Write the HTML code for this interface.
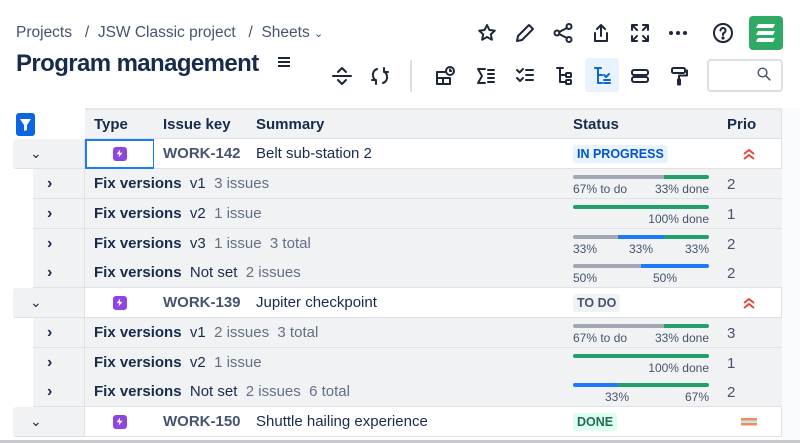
<!DOCTYPE html>
<html><head><meta charset="utf-8">
<style>
*{box-sizing:border-box;margin:0;padding:0}
body{width:800px;height:443px;overflow:hidden;background:#fff;font-family:"Liberation Sans",sans-serif;color:#172b4d;position:relative}
.a{position:absolute}
.ic{position:absolute;width:22px;height:22px}
.ic svg{width:22px;height:22px;fill:none;stroke:#1d2739;stroke-width:2;stroke-linecap:round;stroke-linejoin:round}
.cell{position:absolute;font-size:15px;display:flex;align-items:center;border-right:1px solid #dfe1e6;border-bottom:1px solid #dfe1e6;white-space:nowrap}
.g{background:#f1f2f4}
.w{background:#fff}
.bar{position:absolute;left:573px;width:136px;height:4px;border-radius:2px;overflow:hidden;display:flex}
.pl{position:absolute;font-size:12px;color:#44546f}
.lz{display:inline-block;width:14px;height:14px;background:#8f46e0;border-radius:3px;position:relative}
.lz:after{content:"";position:absolute;left:4px;top:3px;width:6px;height:8px;background:#fff;clip-path:polygon(60% 0,0 60%,45% 60%,35% 100%,100% 40%,55% 40%)}
</style></head><body>
<div class="a" style="left:16px;top:24px;font-size:15.5px;color:#44546f">Projects &nbsp; / &nbsp;JSW Classic project &nbsp; / &nbsp;Sheets <span style="font-size:11px">&#8964;</span></div>
<div class="a" style="left:16px;top:50px;font-size:24px;font-weight:bold;color:#172b4d;letter-spacing:-0.6px">Program management</div>
<div class="a" style="left:278px;top:57px;width:12px;height:2px;background:#1d2739;box-shadow:0 4px 0 #1d2739,0 8px 0 #1d2739"></div>

<div class="ic" style="left:476px;top:22px"><svg viewBox="0 0 22 22"><path d="M11 3l2.4 5 5.4.6-4 3.7 1.1 5.4L11 15l-4.9 2.7 1.1-5.4-4-3.7 5.4-.6z"/></svg></div>
<div class="ic" style="left:514px;top:22px"><svg viewBox="0 0 22 22"><path d="M15 3l4 4L8 18l-5 1 1-5z"/></svg></div>
<div class="ic" style="left:552px;top:22px"><svg viewBox="0 0 22 22"><circle cx="5" cy="11" r="2.5"/><circle cx="17" cy="4.5" r="2.5"/><circle cx="17" cy="17.5" r="2.5"/><path d="M7 10l8-4M7 12l8 4"/></svg></div>
<div class="ic" style="left:590px;top:22px"><svg viewBox="0 0 22 22"><path d="M11 3v11M7 7l4-4 4 4M5 11v8h12v-8"/></svg></div>
<div class="ic" style="left:629px;top:22px"><svg viewBox="0 0 22 22"><path d="M3 8V3h5M14 3h5v5M19 14v5h-5M8 19H3v-5M3 3l5 5M19 3l-5 5M19 19l-5-5M3 19l5-5"/></svg></div>
<div class="a" style="left:669px;top:31px;width:4px;height:4px;border-radius:2px;background:#1d2739;box-shadow:7px 0 0 #1d2739,14px 0 0 #1d2739"></div>
<div class="ic" style="left:712px;top:22px"><svg viewBox="0 0 22 22"><circle cx="11" cy="11" r="9"/><path d="M8.5 8.5a2.5 2.5 0 1 1 3.5 2.3c-.7.3-1 .8-1 1.5v.7"/><circle cx="11" cy="16" r=".6" fill="#1d2739"/></svg></div>
<div class="a" style="left:749px;top:16px;width:34px;height:34px;background:#2eaa64;border-radius:4px"><svg viewBox="0 0 34 34" width="34" height="34" style="fill:#fff"><path d="M9 8h17l-2 4H7zM9 15h17l-2 4H7zM9 22h17l-2 4H7z"/></svg></div>

<div class="ic" style="left:331px;top:65px"><svg viewBox="0 0 22 22"><path d="M2 11h18M7 7l4-4 4 4M7 15l4 4 4-4"/></svg></div>
<div class="ic" style="left:369px;top:65px"><svg viewBox="0 0 22 22"><path d="M8 4C5 5 3.5 8 4 11c.3 2 1.5 3.5 3 4.5M7 19v-4H3M14 18c3-1 4.5-4 4-7-.3-2-1.5-3.5-3-4.5M15 3v4h4"/></svg></div>
<div class="a" style="left:410px;top:60px;width:2px;height:32px;background:#dcdfe4"></div>
<div class="ic" style="left:434px;top:65px"><svg viewBox="0 0 22 22"><path d="M11 7H3v12h13v-6M3 13h13M9 13v6"/><circle cx="16" cy="6" r="4"/><path d="M16 4.5V6h1.3"/></svg></div>
<div class="ic" style="left:475px;top:65px"><svg viewBox="0 0 22 22"><path d="M10 4H3l4 7-4 7h7M13 5h6M13 9h6M13 13h6M13 17h6"/></svg></div>
<div class="ic" style="left:514px;top:65px"><svg viewBox="0 0 22 22"><path d="M3 5l2.5 2.5L9 4M3 13l3 3 3-3M12 5h7M12 10h7M12 15h7"/></svg></div>
<div class="ic" style="left:553px;top:65px"><svg viewBox="0 0 22 22"><path d="M4 3h6M7 3v14h5M7 10h5"/><rect x="13" y="8" width="5" height="4" rx="1"/><rect x="13" y="15" width="5" height="4" rx="1"/></svg></div>
<div class="a" style="left:585px;top:58px;width:34px;height:34px;background:#e9f2ff;border-radius:3px"></div>
<div class="ic" style="left:591px;top:65px"><svg viewBox="0 0 22 22" style="stroke:#0c66e4"><path d="M4 3h6M7 3v15h4M7 10h4M13 10l2 2 3-3M13 15h6M13 18h6"/></svg></div>
<div class="ic" style="left:629px;top:65px"><svg viewBox="0 0 22 22"><rect x="3" y="5" width="16" height="5" rx="2"/><rect x="3" y="12" width="16" height="5" rx="2"/></svg></div>
<div class="ic" style="left:668px;top:65px"><svg viewBox="0 0 22 22"><rect x="4" y="3" width="13" height="5" rx="1.5"/><path d="M17 5.5h2v5h-8v4M10 14.5h2v5h-2z"/></svg></div>
<div class="a" style="left:707px;top:59px;width:76px;height:33px;border:2px solid #dcdfe4;border-radius:4px"></div>
<div class="ic" style="left:756px;top:66px;width:16px;height:16px"><svg viewBox="0 0 22 22" style="width:16px;height:16px;stroke:#44546f"><circle cx="9" cy="9" r="6"/><path d="M14 14l5 5"/></svg></div>

<div class="a" style="left:16px;top:113px;width:19px;height:23px;background:#0c66e4;border-radius:3px"><svg viewBox="0 0 19 23" width="19" height="23"><path d="M4 6h11l-4 6v5l-3 1v-6z" fill="#fff"/></svg></div>

<div class="a" style="left:85px;top:108px;width:697px;height:2px;background:#e4e6ea"></div>
<div class="cell g" style="left:85px;top:110px;width:70px;height:29px;padding-left:9px;font-weight:bold">Type</div>
<div class="cell g" style="left:154px;top:110px;width:93px;height:29px;padding-left:9px;font-weight:bold">Issue key</div>
<div class="cell g" style="left:246px;top:110px;width:319px;height:29px;padding-left:10px;font-weight:bold">Summary</div>
<div class="cell g" style="left:564px;top:110px;width:154px;height:29px;padding-left:9px;font-weight:bold">Status</div>
<div class="cell g" style="left:717px;top:110px;width:65px;height:29px;padding-left:10px;font-weight:bold">Prio</div>
<div class="a" style="left:782px;top:108px;width:18px;height:335px;background:#fafbfc"></div>

<div id="rows"></div>
<script>
const R=document.getElementById('rows');let h='';
function issue(y,key,sum,st,bg,fg,prio,sel){
h+=`<div class="cell g" style="left:13px;top:${y}px;width:72px;height:30px;padding-left:17px;font-size:14px;border-radius:3px 0 0 3px">&#8964;</div>`;
h+=`<div class="cell w" style="left:85px;top:${y}px;width:70px;height:30px;justify-content:center"><span class="lz"></span></div>`;
if(sel)h+=`<div class="a" style="left:85px;top:${y}px;width:70px;height:30px;border:2px solid #1d7afc"></div>`;
h+=`<div class="cell w" style="left:154px;top:${y}px;width:93px;height:30px;padding-left:9px;color:#44546f;font-weight:bold">${key}</div>`;
h+=`<div class="cell w" style="left:246px;top:${y}px;width:319px;height:30px;padding-left:10px">${sum}</div>`;
h+=`<div class="cell w" style="left:564px;top:${y}px;width:154px;height:30px;padding-left:9px"><span style="background:${bg};color:${fg};font-size:12.5px;font-weight:bold;padding:2px 4px;border-radius:3px">${st}</span></div>`;
h+=`<div class="cell w" style="left:717px;top:${y}px;width:65px;height:30px;justify-content:center">${prio}</div>`;
}
function grp(y,ver,cnt,segs,labels,p){
h+=`<div class="cell g" style="left:33px;top:${y}px;width:52px;height:30px;padding-left:14px;font-size:16px;font-weight:bold">&#8250;</div>`;
h+=`<div class="cell g" style="left:85px;top:${y}px;width:480px;height:30px;padding-left:9px;border-right:none"><b>Fix versions</b>&nbsp;&nbsp;${ver}&nbsp;&nbsp;<span style="color:#626f86">${cnt}</span></div>`;
h+=`<div class="cell g" style="left:564px;top:${y}px;width:218px;height:30px;border-right:none"></div>`;
h+=`<div class="bar" style="top:${y+6}px">`+segs.map(s=>`<div style="width:${s[0]}%;background:${s[1]}"></div>`).join('')+`</div>`;
labels.forEach(l=>{h+=`<div class="pl" style="top:${y+13}px;${l[0]}">${l[1]}</div>`});
h+=`<div class="a" style="left:727px;top:${y+7}px;font-size:15px;color:#44546f">${p}</div>`;
}
const G='#22a06b',B='#1d7afc',S='#a1a7b3';
const up='<svg width="14" height="12" viewBox="0 0 14 12" fill="none" stroke="#e2483d" stroke-width="2"><path d="M2 6l5-4 5 4M2 11l5-4 5 4"/></svg>';
const med='<svg width="16" height="10" viewBox="0 0 16 10"><rect y="1" width="16" height="2.5" fill="#f38a6b"/><rect y="6" width="16" height="2.5" fill="#f38a6b"/><rect y="3.5" width="16" height="2.5" fill="#bdf0d4"/></svg>';
issue(139,'WORK-142','Belt sub-station 2','IN PROGRESS','#e9f2ff','#0055cc',up,true);
grp(169,'v1','3 issues',[[67,S],[33,G]],[['left:573px;width:136px;display:flex;justify-content:space-between','<span>67% to do</span><span>33% done</span>']],2);
grp(199,'v2','1 issue',[[100,G]],[['left:573px;width:136px;text-align:right','100% done']],1);
grp(229,'v3','1 issue&nbsp;&nbsp;3 total',[[33,S],[34,B],[33,G]],[['left:573px;width:136px;display:flex;justify-content:space-between','<span>33%</span><span>33%</span><span>33%</span>']],2);
grp(258,'Not set','2 issues',[[50,S],[50,B]],[['left:573px','50%'],['left:653px','50%']],2);
issue(288,'WORK-139','Jupiter checkpoint','TO DO','#f1f2f4','#44546f',up,false);
grp(318,'v1','2 issues&nbsp;&nbsp;3 total',[[67,S],[33,G]],[['left:573px;width:136px;display:flex;justify-content:space-between','<span>67% to do</span><span>33% done</span>']],3);
grp(348,'v2','1 issue',[[100,G]],[['left:573px;width:136px;text-align:right','100% done']],1);
grp(377,'Not set','2 issues&nbsp;&nbsp;6 total',[[33,B],[67,G]],[['left:605px','33%'],['left:573px;width:136px;text-align:right','67%']],2);
issue(407,'WORK-150','Shuttle hailing experience','DONE','#dcfff1','#216e4e',med,false);
h+=`<div class="a" style="left:0;top:440px;width:800px;height:3px;background:#c8c9cc"></div>`;
R.innerHTML=h;
</script>
</body></html>
